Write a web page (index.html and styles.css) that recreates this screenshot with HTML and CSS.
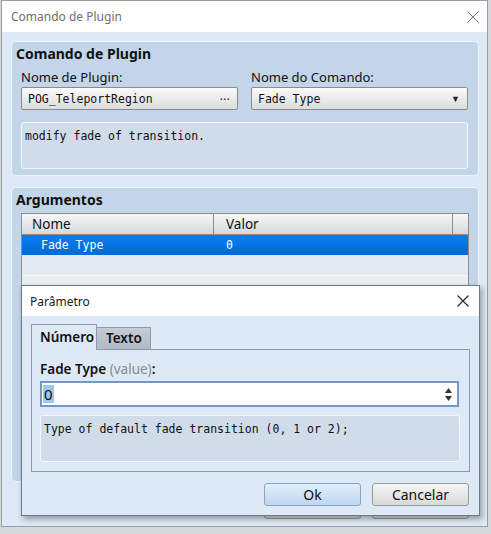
FILE: index.html
```html
<!DOCTYPE html>
<html lang="pt">
<head>
    <meta charset="UTF-8">
    <meta name="viewport" content="width=device-width, initial-scale=1.0">
    <title>Comando de Plugin</title>
    <link rel="stylesheet" href="styles.css">
</head>
<body>
    <div class="window">
        <div class="titlebar">
            <span class="title">Comando de Plugin</span>
            <svg class="close" width="12" height="12" viewBox="0 0 12 12"><path d="M0.5 0.5 L11.5 11.5 M11.5 0.5 L0.5 11.5" stroke="#777" stroke-width="1" fill="none"/></svg>
        </div>
        <div class="client">
            <section class="group group-command">
                <h2>Comando de Plugin</h2>
                <div class="fields">
                    <div class="field">
                        <span class="label">Nome de Plugin:</span>
                        <div class="combo"><span class="mono">POG_TeleportRegion</span><span class="dots">···</span></div>
                    </div>
                    <div class="field">
                        <span class="label">Nome do Comando:</span>
                        <div class="combo"><span class="mono">Fade Type</span><span class="arrow">▼</span></div>
                    </div>
                </div>
                <div class="note mono">modify fade of transition.</div>
            </section>

            <section class="group group-args">
                <h2>Argumentos</h2>
                <div class="table">
                    <div class="row head">
                        <span class="col-name">Nome</span>
                        <span class="col-value">Valor</span>
                        <span class="col-end"></span>
                    </div>
                    <div class="row selected mono">
                        <span class="col-name">Fade Type</span>
                        <span class="col-value">0</span>
                    </div>
                    <div class="row empty"></div>
                    <div class="row empty alt"></div>
                </div>
            </section>

            <!-- botões da janela de trás, cobertos pelo diálogo -->
            <div class="actions">
                <span class="btn"></span>
                <span class="btn"></span>
            </div>
        </div>

        <div class="dialog">
            <div class="titlebar small">
                <span class="title">Parâmetro</span>
                <svg class="close" width="12" height="12" viewBox="0 0 12 12"><path d="M0.5 0.5 L11.5 11.5 M11.5 0.5 L0.5 11.5" stroke="#222" stroke-width="1.1" fill="none"/></svg>
            </div>
            <div class="dialog-body">
                <div class="tabs">
                    <span class="tab active">Número</span>
                    <span class="tab">Texto</span>
                </div>
                <div class="panel">
                    <div class="param-label">Fade Type <span class="hint">(value)</span>:</div>
                    <div class="spin">
                        <span class="value">0</span>
                        <span class="spin-arrows">
                            <svg width="7" height="5" viewBox="0 0 7 5"><path d="M3.5 0 L7 5 L0 5 Z" fill="#333"/></svg>
                            <svg width="7" height="5" viewBox="0 0 7 5"><path d="M0 0 L7 0 L3.5 5 Z" fill="#333"/></svg>
                        </span>
                    </div>
                    <div class="note mono">Type of default fade transition (0, 1 or 2);</div>
                </div>
                <div class="actions">
                    <button class="btn default">Ok</button>
                    <button class="btn">Cancelar</button>
                </div>
            </div>
        </div>
    </div>
</body>
</html>
```

FILE: styles.css
```css
* {
    box-sizing: border-box;
}
body {
    margin: 0;
    width: 491px;
    height: 534px;
    overflow: hidden;
    background-color: #d6d8db;
    font-family: "Noto Sans", sans-serif;
    font-size: 13px;
    color: #111;
}
.mono {
    font-family: "DejaVu Sans Mono", monospace;
    font-size: 11.5px;
}
.window {
    position: relative;
    margin-left: 1px;
    width: 487px;
    height: 527px;
    border: 1px solid #9c9c9c;
    background-color: #dde9f6;
}
.titlebar {
    height: 31px;
    background-color: #fff;
    display: flex;
    align-items: center;
    justify-content: space-between;
    padding: 0 8px 0 9px;
}
.titlebar .title {
    font-size: 12px;
    color: #707070;
}
.titlebar.small {
    height: 30px;
    padding: 0 10px 0 8px;
}
.titlebar.small .title {
    color: #1a1a1a;
}
.client {
    padding: 9px 8px 0 9px;
}
.group {
    border: 1px solid #eef4fa;
    border-radius: 5px;
    background-color: #c3d5e9;
    padding: 0 9px 0 9px;
}
.group h2 {
    margin: 3px 0 0 -5px;
    font-size: 14px;
    line-height: 18px;
    font-weight: bold;
}
.group-command {
    padding-bottom: 6px;
}
.fields {
    display: grid;
    grid-template-columns: 217px 217px;
    column-gap: 13px;
    margin-top: 6px;
}
.field .label {
    display: block;
    line-height: 16px;
    margin-bottom: 2px;
}
.combo {
    height: 23px;
    border: 1px solid #8c8c8c;
    border-radius: 2px;
    background: linear-gradient(#fbfbfb, #dcdcdc);
    display: flex;
    align-items: center;
    justify-content: space-between;
    padding: 0 7px 0 6px;
}
.dots {
    font-size: 13px;
    letter-spacing: 0;
    color: #333;
}
.arrow {
    font-size: 9px;
    color: #222;
}
.note {
    height: 47px;
    margin-top: 12px;
    border: 1px solid #f3f7fb;
    border-radius: 3px;
    background-color: #d0dce9;
    padding: 5px 3px;
    line-height: 16px;
}
.group-command .note {
    margin-right: 1px;
}
.group-args {
    margin-top: 11px;
    height: 295px;
}
.table {
    margin-top: 4px;
    border: 1px solid #8d8d8d;
    border-bottom: none;
    background-color: #e6ebf1;
}
.row {
    display: flex;
    height: 20px;
    align-items: center;
}
.row.head {
    height: 21px;
    background: linear-gradient(#f7f7f7, #d6d9dc);
    border-bottom: 1px solid #8d8d8d;
    font-size: 13.5px;
}
.col-name {
    width: 192px;
    padding-left: 10px;
    height: 100%;
    display: flex;
    align-items: center;
}
.head .col-name {
    border-right: 1px solid #8d8d8d;
}
.selected .col-name {
    padding-left: 19px;
}
.col-value {
    flex: 1;
    padding-left: 12px;
    height: 100%;
    display: flex;
    align-items: center;
}
.head .col-end {
    width: 16px;
    height: 100%;
    border-left: 1px solid #8d8d8d;
}
.row.selected {
    background: linear-gradient(#0a7df0, #006ad6);
    color: #fff;
}
.row.empty {
    background-color: #e4eaf1;
}
.row.alt {
    background-color: #e9eef3;
    border-top: 1px solid #f5f7f9;
}
.actions {
    display: flex;
    justify-content: flex-end;
    gap: 11px;
}
.client > .actions {
    margin-top: 14px;
    padding-right: 10px;
}
.btn {
    display: block;
    width: 97px;
    height: 23px;
    border: 1px solid #9a9a9a;
    border-radius: 3px;
    background: linear-gradient(#f6f6f6, #d9d9d9);
    font-family: "Noto Sans", sans-serif;
    font-size: 14px;
    color: #111;
    padding: 0;
}
.btn.default {
    border-color: #8aa4c4;
    background: linear-gradient(#e2eefa, #bfd6ef);
}
.dialog {
    position: absolute;
    left: 19px;
    top: 284px;
    width: 459px;
    height: 231px;
    border: 1px solid #707a85;
    background-color: #dde9f6;
    box-shadow: 2px 3px 6px rgba(0, 0, 0, 0.35);
}
.dialog-body {
    padding: 8px 9px 0 9px;
}
.tabs {
    display: flex;
    align-items: flex-end;
    height: 26px;
    position: relative;
    z-index: 1;
}
.tab {
    font-size: 13.5px;
    font-weight: 600;
    border: 1px solid #8b9ab0;
    border-bottom: none;
}
.tab.active {
    width: 66px;
    height: 26px;
    padding: 3px 0 0 8px;
    background-color: #dde9f6;
}
.tab:not(.active) {
    width: 54px;
    height: 22px;
    margin-bottom: 1px;
    border-left: none;
    padding: 0 0 0 9px;
    line-height: 20px;
    background: linear-gradient(#c4ccd5, #afbac6);
}
.panel {
    margin-top: -1px;
    height: 123px;
    border: 1px solid #8b9ab0;
    padding: 10px 10px 0 8px;
}
.param-label {
    font-size: 13.5px;
    font-weight: 600;
    line-height: 18px;
}
.hint {
    color: #8a8a8a;
    font-weight: normal;
}
.spin {
    margin-top: 3px;
    height: 26px;
    border: 2px solid #7497c6;
    background-color: #fff;
    display: flex;
    align-items: center;
    justify-content: space-between;
    padding: 0 5px 0 1px;
}
.spin .value {
    font-size: 15px;
    line-height: 18px;
    background-color: #99c9ef;
    padding: 0 1px;
}
.spin-arrows {
    display: flex;
    flex-direction: column;
    gap: 3px;
}
.spin-arrows svg {
    display: block;
}
.panel .note {
    margin-top: 8px;
    margin-right: -1px;
}
.dialog .actions {
    margin-top: 11px;
    padding-right: 1px;
}
```
